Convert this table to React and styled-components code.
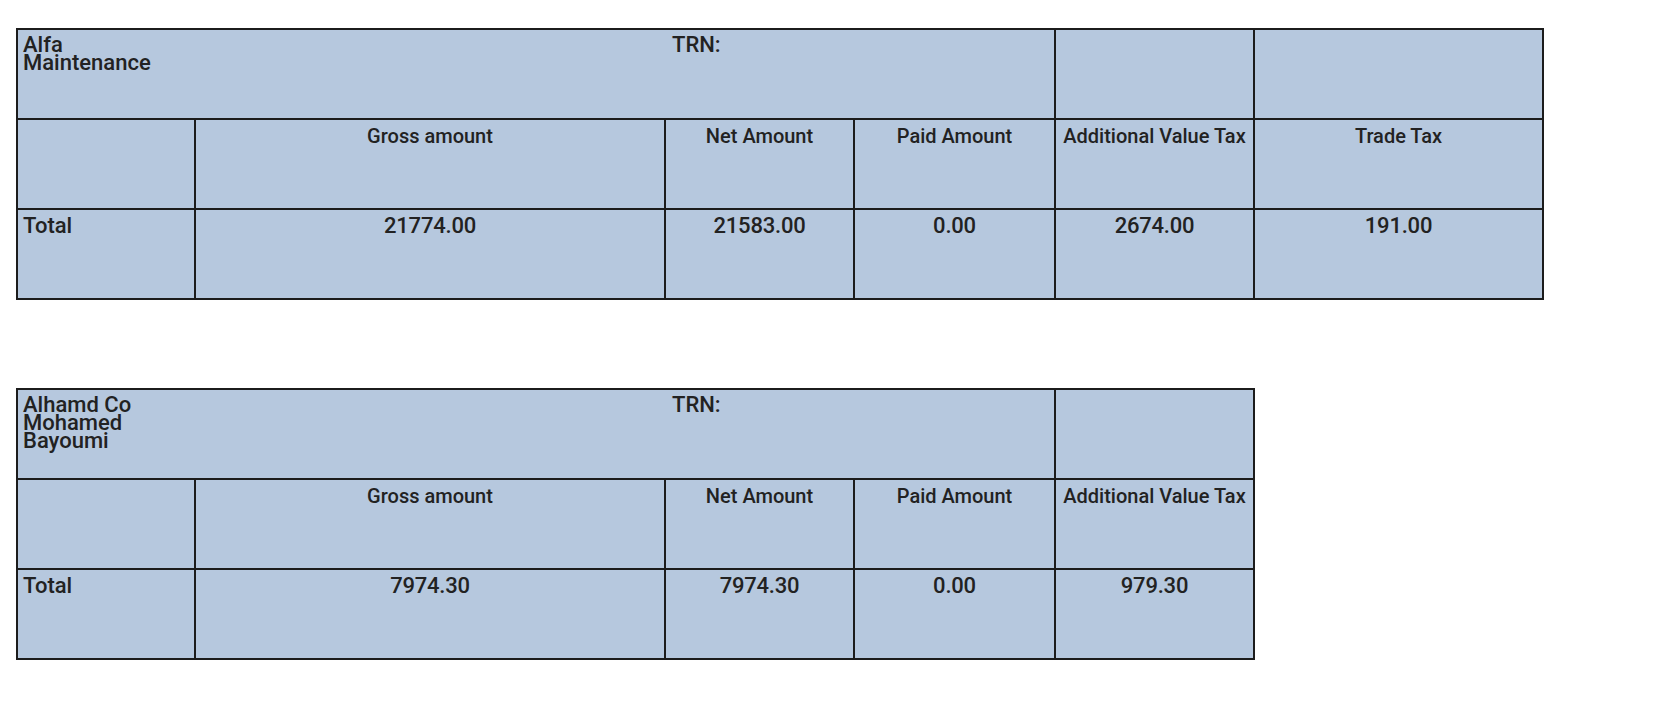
import React from "react";
import styled, { createGlobalStyle } from "styled-components";

const GlobalStyle = createGlobalStyle`
  body {
    margin: 0;
    background: #ffffff;
    font-family: Roboto, "Noto Sans", "Liberation Sans", sans-serif;
    color: #222;
  }
`;

const COLUMNS = [178, 470, 189, 201, 199, 289];

const companies = [
  {
    name: "Alfa Maintenance",
    headers: ["Gross amount", "Net Amount", "Paid Amount", "Additional Value Tax", "Trade Tax"],
    totals: ["21774.00", "21583.00", "0.00", "2674.00", "191.00"],
  },
  {
    name: "Alhamd Co Mohamed Bayoumi",
    headers: ["Gross amount", "Net Amount", "Paid Amount", "Additional Value Tax"],
    totals: ["7974.30", "7974.30", "0.00", "979.30"],
  },
];

export default function App() {
  return (
    <>
      <GlobalStyle />
      <Page>
        {companies.map((c) => (
          <CompanyTable key={c.name} {...c} />
        ))}
      </Page>
    </>
  );
}

const CompanyTable = ({ name, headers, totals }) => {
  const cols = headers.length + 1;
  return (
    <Grid cols={COLUMNS.slice(0, cols)}>
      <NameCell>{name}</NameCell>
      <BlankCell />
      <TrnCell>TRN:</TrnCell>
      {Array.from({ length: cols - 4 }).map((_, i) => (
        <Cell key={i} />
      ))}

      <Cell />
      {headers.map((h) => (
        <HeadCell key={h}>{h}</HeadCell>
      ))}

      <LabelCell>Total</LabelCell>
      {totals.map((t, i) => (
        <ValueCell key={i}>{t}</ValueCell>
      ))}
    </Grid>
  );
};

const Page = styled.div`
  display: flex;
  flex-direction: column;
  align-items: flex-start;
  gap: 88px;
  padding: 28px 0 0 16px;
`;

const Grid = styled.div`
  display: grid;
  grid-template-columns: ${({ cols }) => cols.map((c) => c + "px").join(" ")};
  grid-auto-rows: 90px;
  border-top: 2px solid #1c1c1c;
  border-left: 2px solid #1c1c1c;
  background: #b6c8de;
  font-weight: 500;
`;

const Cell = styled.div`
  box-sizing: border-box;
  border-right: 2px solid #1c1c1c;
  border-bottom: 2px solid #1c1c1c;
  padding: 0 6px;
`;

const NameCell = styled(Cell)`
  border-right: none;
  font-size: 22px;
  line-height: 18px;
  padding-top: 6px;
  padding-left: 5px;
`;

const BlankCell = styled(Cell)`
  border-right: none;
`;

const TrnCell = styled(Cell)`
  grid-column: span 2;
  font-size: 22px;
  line-height: 18px;
  padding-top: 6px;
`;

const HeadCell = styled(Cell)`
  font-size: 20px;
  text-align: center;
  padding: 4px 2px 0;
  white-space: nowrap;
`;

const ValueCell = styled(Cell)`
  font-size: 22px;
  text-align: center;
  padding-top: 3px;
  letter-spacing: -0.2px;
`;

const LabelCell = styled(Cell)`
  font-size: 22px;
  padding-top: 3px;
  padding-left: 5px;
`;
